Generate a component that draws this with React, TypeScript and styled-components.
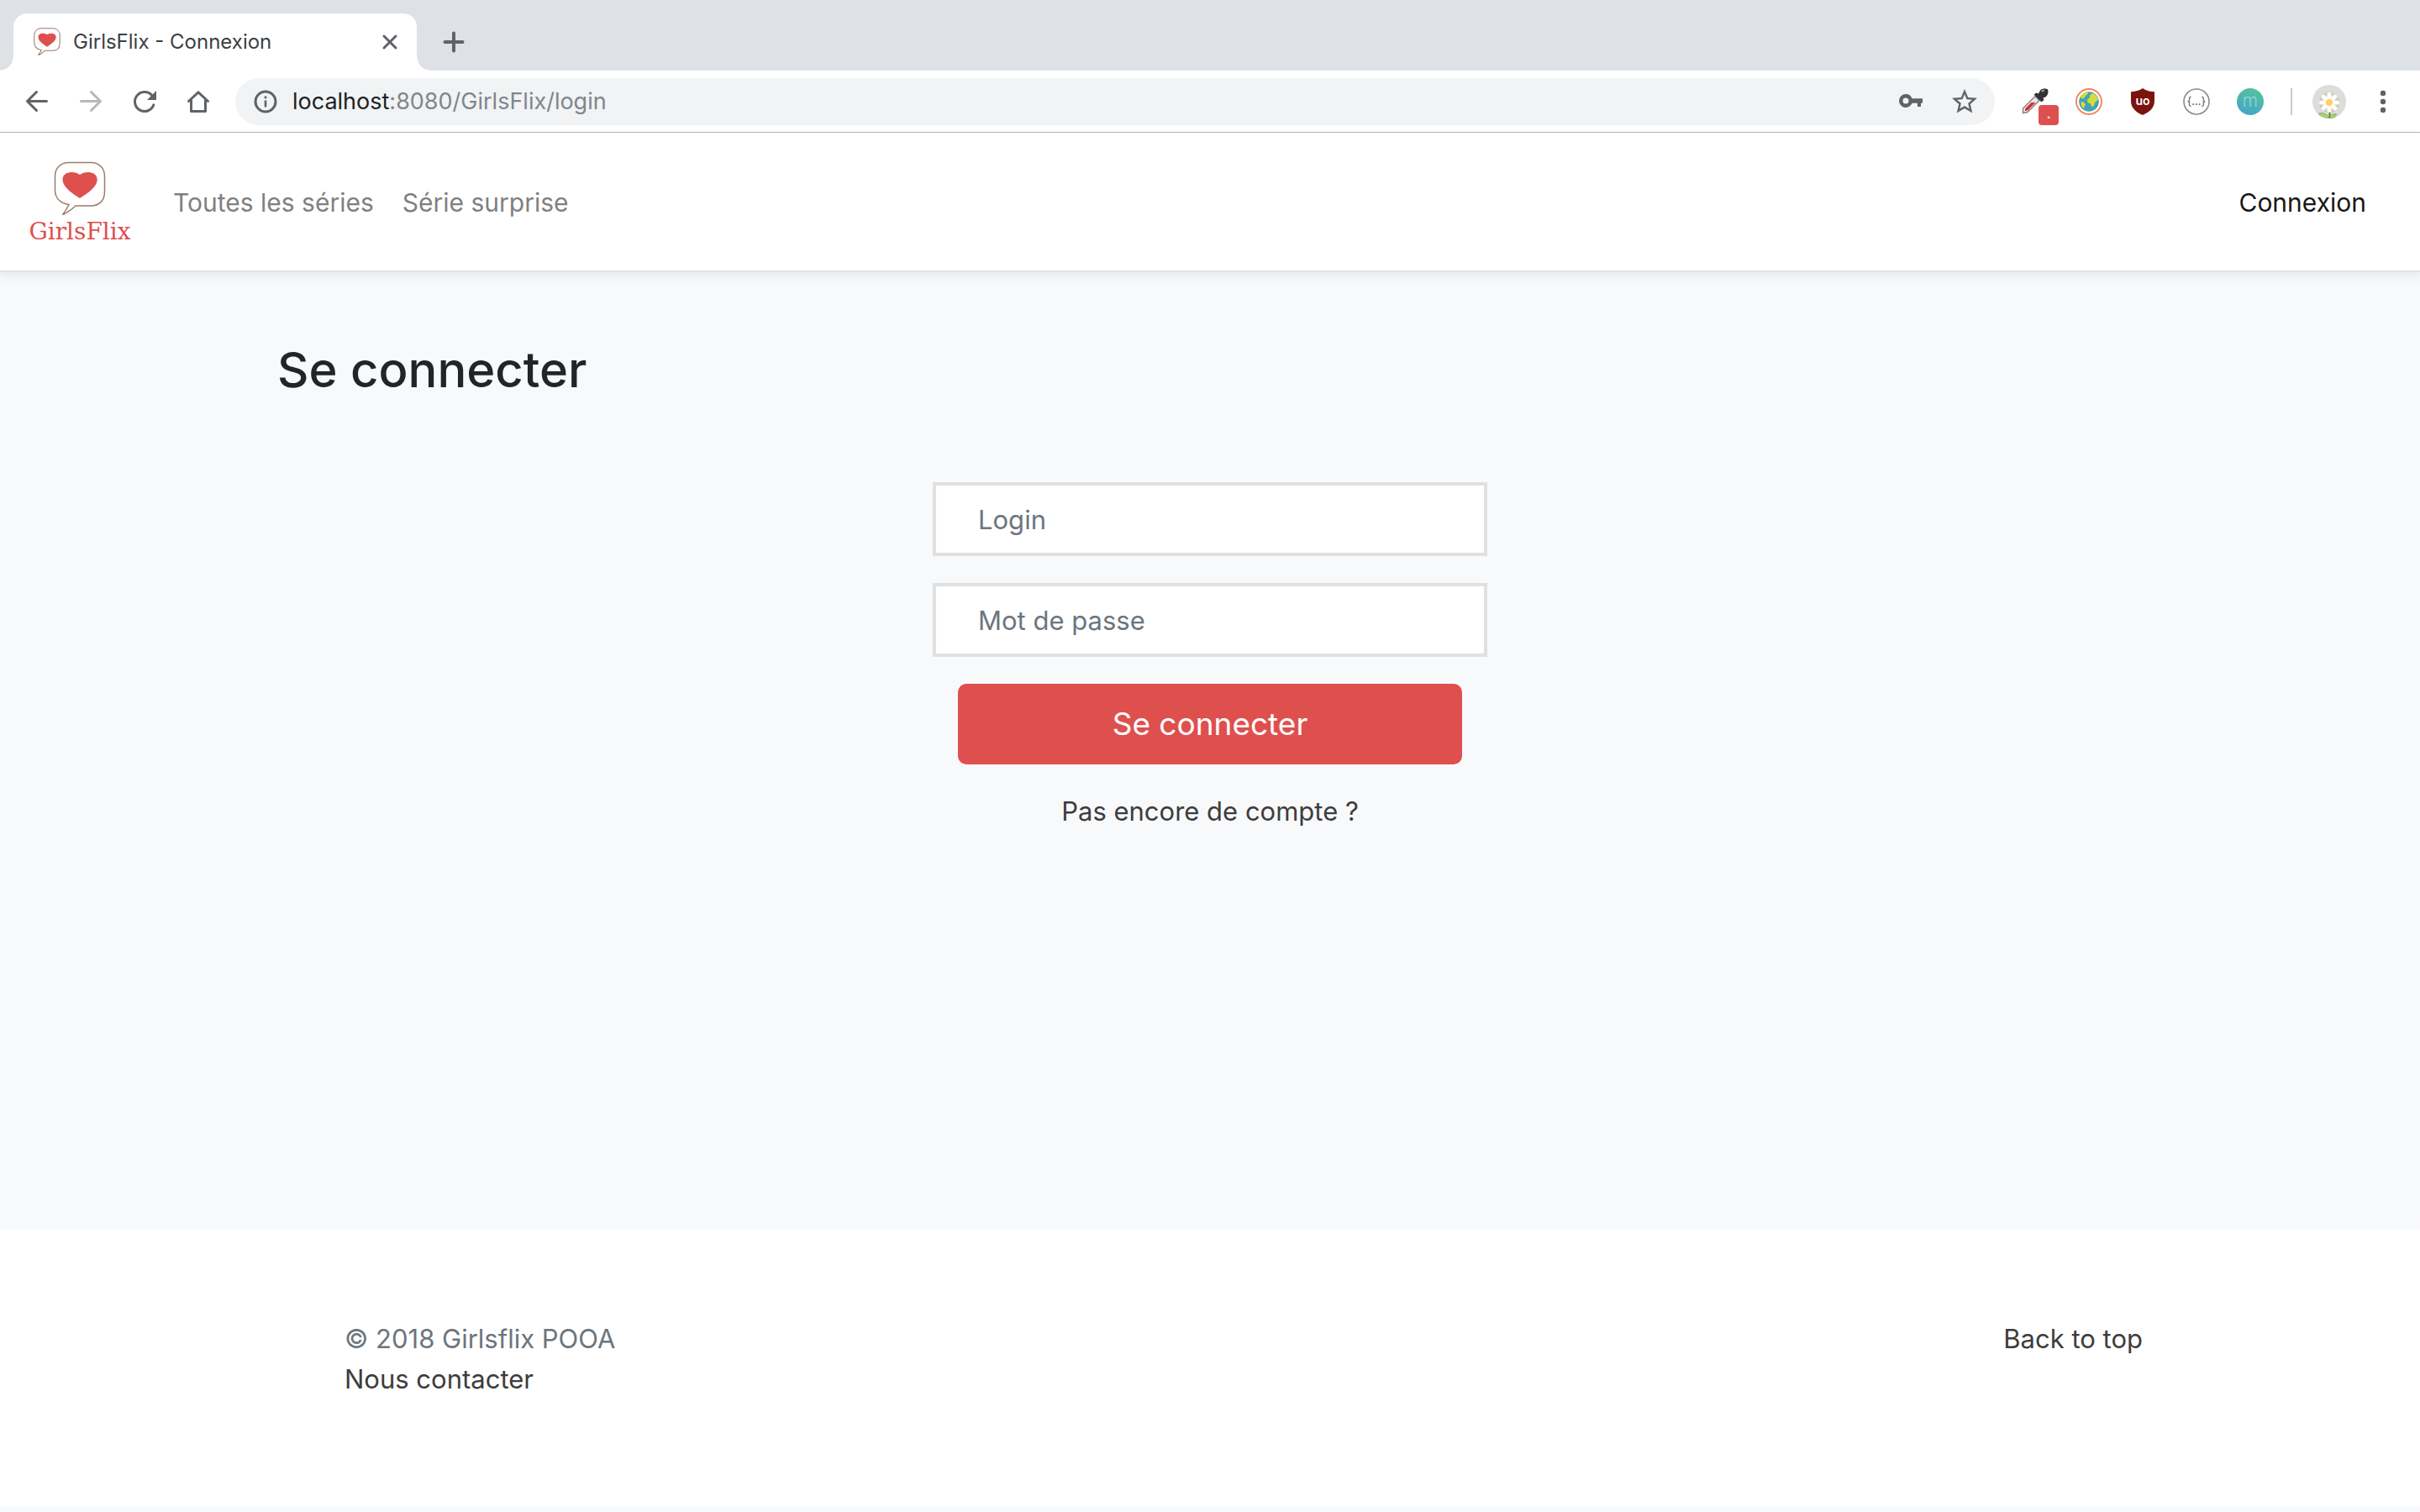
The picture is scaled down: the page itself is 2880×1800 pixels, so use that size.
import React from "react";
import styled, { createGlobalStyle } from "styled-components";

const colors = {
  strip: "#dee1e6",
  icon: "#5f6368",
  pill: "#f1f3f4",
  page: "#f8f9fb",
  red: "#de504e",
  muted: "#6c757d",
  link: "#3d3d3d",
};

const GlobalStyle = createGlobalStyle`
  *, *::before, *::after { box-sizing: border-box; }
  body {
    margin: 0;
    background: ${colors.page};
    color: #212529;
    font-family: Inter, "Liberation Sans", sans-serif;
    font-size: 31px;
    line-height: 48px;
  }
  button, input { font: inherit; }
`;

const Window = styled.div`
  display: flex;
  flex-direction: column;
  min-height: 100vh;
  padding-bottom: 6px;
`;

/* Browser chrome */

const TabStrip = styled.div`
  display: flex;
  height: 84px;
  padding: 16px 16px 0;
  background: ${colors.strip};
`;

const Tab = styled.div`
  position: relative;
  display: flex;
  align-items: center;
  width: 480px;
  padding: 0 16px 0 24px;
  border-radius: 16px 16px 0 0;
  background: #fff;
  color: #3c4043;
  font-size: 24px;
  line-height: 32px;

  &::before,
  &::after {
    content: "";
    position: absolute;
    bottom: 0;
    width: 16px;
    height: 16px;
  }
  &::before {
    right: 100%;
    background: radial-gradient(circle at 0 0, transparent 15px, #fff 16px);
  }
  &::after {
    left: 100%;
    background: radial-gradient(circle at 100% 0, transparent 15px, #fff 16px);
  }
`;

const TabTitle = styled.span`
  flex: 1;
  margin-left: 15px;
  white-space: nowrap;
`;

const PlainButton = styled.button`
  display: inline-flex;
  align-items: center;
  justify-content: center;
  flex: none;
  padding: 0;
  border: 0;
  background: none;
  color: ${colors.icon};
  cursor: pointer;
`;

const CloseButton = styled(PlainButton)`
  width: 32px;
  height: 32px;
`;

const NewTabButton = styled(PlainButton)`
  width: 56px;
  margin-left: 16px;
`;

const Toolbar = styled.div`
  display: flex;
  align-items: center;
  height: 74px;
  padding: 0 12px;
  border-bottom: 1px solid #b4b5b7;
  background: #fff;
`;

const ToolButton = styled(PlainButton)<{ $faded?: boolean }>`
  position: relative;
  width: 64px;
  height: 56px;
  opacity: ${(p) => (p.$faded ? 0.45 : 1)};
`;

const AddressBar = styled.div`
  display: flex;
  flex: 1;
  align-items: center;
  height: 56px;
  margin: 0 16px 0 12px;
  padding: 0 4px;
  border-radius: 28px;
  background: ${colors.pill};
`;

const Address = styled.span`
  flex: 1;
  color: #80868b;
  font-size: 27px;
  line-height: 32px;
`;

const Host = styled.span`
  color: #202124;
`;

const Badge = styled.span`
  position: absolute;
  right: 4px;
  bottom: 0;
  width: 24px;
  height: 24px;
  border-radius: 4px;
  background: ${colors.red};
  color: #fff;
  font-size: 18px;
  line-height: 20px;
  text-align: center;
`;

const Separator = styled.span`
  width: 2px;
  height: 32px;
  margin: 0 12px 0 16px;
  background: #c8c9cb;
`;

/* Site */

const Navbar = styled.nav`
  position: relative;
  display: flex;
  align-items: center;
  height: 166px;
  padding: 2px 64px 0 32px;
  border-bottom: 2px solid #dee2e6;
  background: #fff;
  box-shadow: 0 4px 12px rgba(0, 0, 0, 0.08);
`;

const Brand = styled.a`
  display: flex;
  flex-direction: column;
  align-items: center;
  width: 126px;
  margin-right: 48px;
  padding-top: 4px;
  color: ${colors.red};
  font-family: "DejaVu Serif", serif;
  font-size: 28px;
  line-height: 36px;
  text-decoration: none;
`;

const NavLinks = styled.div`
  display: flex;
  flex: 1;
  gap: 34px;
`;

const NavLink = styled.a<{ $active?: boolean }>`
  color: ${(p) => (p.$active ? "#181818" : "#808080")};
  font-size: 30px;
  text-decoration: none;
  white-space: nowrap;
`;

const Main = styled.main`
  flex: 1;
  width: 100%;
  max-width: 2220px;
  margin: 0 auto;
  padding: 78px 0 64px;
`;

const Title = styled.h1`
  margin: 0 0 96px;
  font-size: 58px;
  font-weight: 500;
  line-height: 76px;
`;

const LoginForm = styled.form`
  display: flex;
  flex-direction: column;
  gap: 32px;
  max-width: 660px;
  margin: 0 auto;
`;

const Field = styled.input`
  width: 100%;
  height: 88px;
  padding: 0 50px;
  border: 4px solid #dee0e2;
  border-radius: 0;
  background: #fff;
  color: #495057;

  &::placeholder {
    color: ${colors.muted};
    opacity: 1;
  }
`;

const SubmitButton = styled.button`
  height: 96px;
  margin: 0 30px;
  border: 0;
  border-radius: 10px;
  background: ${colors.red};
  color: #fff;
  font-size: 37px;
  cursor: pointer;
`;

const TextLink = styled.a`
  align-self: center;
  color: ${colors.link};
  text-decoration: none;
`;

const Footer = styled.footer`
  padding: 106px 0 128px;
  background: #fff;
`;

const FooterInner = styled.div`
  display: flex;
  align-items: flex-start;
  justify-content: space-between;
  max-width: 2220px;
  margin: 0 auto;
  padding-left: 80px;
`;

const FooterColumn = styled.div`
  display: flex;
  flex-direction: column;
  align-items: flex-start;
  color: ${colors.muted};
`;

const FooterLink = styled.a`
  color: ${colors.link};
  text-decoration: none;
`;

/* Drawings */

type IconProps = { size?: number; children: React.ReactNode };

const Icon = ({ size = 32, children }: IconProps) => (
  <svg width={size} height={size} viewBox="0 0 32 32" fill="none" aria-hidden="true">
    {children}
  </svg>
);

const line = {
  stroke: "currentColor",
  strokeWidth: 3,
  strokeLinecap: "round" as const,
  strokeLinejoin: "round" as const,
};

const BubbleHeart = ({ width, height, stroke }: { width: number; height: number; stroke: number }) => (
  <svg width={width} height={height} viewBox="0 0 62 66" fill="none" aria-hidden="true">
    <path
      d="M18 51.500C8 50 1.500 44 1.500 34V18C1.500 8 8 1.500 18 1.500H44C54 1.500 60.500 8 60.500 18V36C60.500 47 54 53 44 53H26C21 57.500 17 61 10.500 63.500C13.500 60 16 56 18 51.500Z"
      stroke="#9b7b68"
      strokeWidth={stroke}
    />
    <path
      d="M31 44C24 39.500 10.500 31.500 10.500 21.500C10.500 16.500 15 13 21 13C25 13 28.500 14 31 16C33.500 14 37 13 41 13C47 13 51.700 16.500 51.700 21.500C51.700 31.500 38 39.500 31 44Z"
      fill={colors.red}
    />
  </svg>
);

const petals = [0, 45, 90, 135, 180, 225, 270, 315];

const Daisy = () => (
  <svg width="40" height="40" viewBox="0 0 40 40" aria-hidden="true">
    <defs>
      <clipPath id="avatar">
        <circle cx="20" cy="20" r="20" />
      </clipPath>
    </defs>
    <g clipPath="url(#avatar)">
      <rect width="40" height="40" fill="#dcdcdc" />
      <path d="M20.500 24V40" stroke="#5d8a35" strokeWidth="2" />
      <path d="M20 40C12 41 8 38 8 34C13 33 18 35 20 40Z" fill="#a9d27c" stroke="#7fae52" />
      <path d="M21 40C21 36 24 34 28.500 35C28 38 25 40 21 40Z" fill="#a9d27c" stroke="#7fae52" />
      {petals.map((a) => (
        <ellipse key={a} cx="20" cy="13.500" rx="2.400" ry="5" fill="#d6c8b2" transform={`rotate(${a + 22} 20 21)`} />
      ))}
      {petals.map((a) => (
        <ellipse key={a} cx="20" cy="13.500" rx="2.600" ry="4.500" fill="#fff" transform={`rotate(${a} 20 21)`} />
      ))}
      <circle cx="20" cy="21" r="4.300" fill="#fbd264" />
    </g>
  </svg>
);

export default function App() {
  return (
    <Window id="top">
      <GlobalStyle />

      <TabStrip>
        <Tab>
          <BubbleHeart width={32} height={34} stroke={2} />
          <TabTitle>GirlsFlix - Connexion</TabTitle>
          <CloseButton type="button" aria-label="Fermer">
            <Icon>
              <path d="M9 9L23 23M23 9L9 23" {...line} />
            </Icon>
          </CloseButton>
        </Tab>
        <NewTabButton type="button" aria-label="Nouvel onglet">
          <Icon>
            <path d="M16 5.500V26.500M5.500 16H26.500" {...line} strokeWidth={4} />
          </Icon>
        </NewTabButton>
      </TabStrip>

      <Toolbar>
        <ToolButton type="button" aria-label="Précédent">
          <Icon>
            <path d="M15.500 4.500L4.500 15.500L15.500 26.500M4.500 15.500H27.500" {...line} />
          </Icon>
        </ToolButton>
        <ToolButton type="button" aria-label="Suivant" $faded>
          <Icon>
            <path d="M16.500 4.500L27.500 15.500L16.500 26.500M27.500 15.500H4.500" {...line} />
          </Icon>
        </ToolButton>
        <ToolButton type="button" aria-label="Actualiser">
          <Icon>
            <path d="M24.500 8.200A11.500 11.500 0 1 0 26.900 19.800" {...line} />
            <path d="M30 3V14H19Z" fill="currentColor" />
          </Icon>
        </ToolButton>
        <ToolButton type="button" aria-label="Accueil">
          <Icon>
            <path d="M4.500 15.500L16 4.800L27.500 15.500M7.500 14V27.500H24.500V14" {...line} />
          </Icon>
        </ToolButton>
        <AddressBar>
          <ToolButton type="button" aria-label="Informations">
            <Icon>
              <circle cx="16" cy="16" r="12" stroke="currentColor" strokeWidth="3" />
              <path d="M16 14.500V22.500M16 9.500V12.200" stroke="currentColor" strokeWidth="2.600" />
            </Icon>
          </ToolButton>
          <Address>
            <Host>localhost</Host>:8080/GirlsFlix/login
          </Address>
          <ToolButton type="button" aria-label="Mots de passe">
            <Icon>
              <path
                fill="currentColor"
                fillRule="evenodd"
                d="M10 7A8 8 0 0 1 17.500 12.300H30V17.800H28V22H24V17.800H17.500A8 8 0 1 1 10 7ZM10 11.500A3.500 3.500 0 1 0 10 18.500A3.500 3.500 0 1 0 10 11.500Z"
              />
            </Icon>
          </ToolButton>
          <ToolButton type="button" aria-label="Favori">
            <svg width="36" height="36" viewBox="0 0 24 24" aria-hidden="true">
              <path
                fill="currentColor"
                d="M22 9.240l-7.190-.620L12 2 9.190 8.630 2 9.240l5.460 4.730L5.820 21 12 17.270 18.180 21l-1.630-7.030L22 9.240zM12 15.400l-3.760 2.270 1-4.280-3.320-2.880 4.380-.380L12 6.100l1.710 4.040 4.380.380-3.320 2.880 1 4.280L12 15.400z"
              />
            </svg>
          </ToolButton>
        </AddressBar>

        <ToolButton type="button" aria-label="Pipette">
          <Icon>
            <path d="M1.500 29.500V24L16 9.500L21 14.500L7 28.500Z" fill="#e9e4e4" stroke="#8a8484" strokeWidth="1.500" />
            <path d="M4 27V24.500L11.500 17H16.500L7 26.500Z" fill="#d22d31" />
            <path d="M14.500 7.500L17.500 5.500L20 6.500L22 2.500C24.500 0 29 0 31 1.500C32 4 31.500 8 28.500 10.500L25.500 11.500L26.500 14L23.500 16.500Z" fill="#333" />
            <path d="M23.500 3.800L27 2.500" stroke="#999" strokeWidth="2" />
          </Icon>
          <Badge>.</Badge>
        </ToolButton>
        <ToolButton type="button" aria-label="Globe">
          <Icon>
            <circle cx="16" cy="16" r="15" fill="#fff" stroke="#f47f57" strokeWidth="1.800" />
            <circle cx="16" cy="16" r="11.800" fill="#43a3b3" />
            <path d="M6.500 9C9 6 12 4.600 15 4.300L14.500 7L12 9L10.500 11.500L8 12.500L6 11Z" fill="#d5dc40" />
            <path d="M6.500 16L9.500 16.500L12 19L10.500 22L9.500 24.500L7 21Z" fill="#d5dc40" />
            <path d="M17.500 7.500L21 6L25 9L27 13L25 15.500L23 17L22.500 20L19.500 22.500L18 18.500L14.500 17L14 13.500L17 11Z" fill="#d5dc40" />
          </Icon>
        </ToolButton>
        <ToolButton type="button" aria-label="Bloqueur">
          <Icon>
            <path d="M16 0C20 3 25 4 30 4.200V15C30 23.500 24 28.500 16 32C8 28.500 2 23.500 2 15V4.200C7 4 12 3 16 0Z" fill="#7c130e" />
            <text x="16" y="20" textAnchor="middle" fill="#fff" fontFamily="Inter, sans-serif" fontSize="14" fontWeight="600">uo</text>
          </Icon>
        </ToolButton>
        <ToolButton type="button" aria-label="JSON">
          <Icon>
            <circle cx="16" cy="16" r="15" fill="#fff" stroke="#8b8b8b" strokeWidth="1.600" />
            <text x="16" y="20" textAnchor="middle" fill="#555" fontFamily="Inter, sans-serif" fontSize="13">{"{...}"}</text>
          </Icon>
        </ToolButton>
        <ToolButton type="button" aria-label="Momentum">
          <Icon>
            <defs>
              <linearGradient id="teal" x1="0.700" y1="0" x2="0.300" y2="1">
                <stop offset="0" stopColor="#56c3a0" />
                <stop offset="1" stopColor="#43a6c6" />
              </linearGradient>
            </defs>
            <circle cx="16" cy="16" r="16" fill="url(#teal)" />
            <text x="16" y="22" textAnchor="middle" fill="#a9e0d8" fontFamily="Inter, sans-serif" fontSize="21" fontWeight="200">m</text>
          </Icon>
        </ToolButton>
        <Separator />
        <ToolButton type="button" aria-label="Profil">
          <Daisy />
        </ToolButton>
        <ToolButton type="button" aria-label="Menu">
          <Icon>
            <g fill="currentColor">
              <circle cx="16" cy="6" r="3.200" />
              <circle cx="16" cy="16" r="3.200" />
              <circle cx="16" cy="26" r="3.200" />
            </g>
          </Icon>
        </ToolButton>
      </Toolbar>

      <Navbar>
        <Brand href="#">
          <BubbleHeart width={62} height={66} stroke={1.5} />
          GirlsFlix
        </Brand>
        <NavLinks>
          <NavLink href="#">Toutes les séries</NavLink>
          <NavLink href="#">Série surprise</NavLink>
        </NavLinks>
        <NavLink href="#" $active>
          Connexion
        </NavLink>
      </Navbar>

      <Main>
        <Title>Se connecter</Title>
        <LoginForm onSubmit={(e) => e.preventDefault()}>
          <Field type="text" name="login" placeholder="Login" aria-label="Login" />
          <Field type="password" name="password" placeholder="Mot de passe" aria-label="Mot de passe" />
          <SubmitButton type="submit">Se connecter</SubmitButton>
          <TextLink href="#">Pas encore de compte ?</TextLink>
        </LoginForm>
      </Main>

      <Footer>
        <FooterInner>
          <FooterColumn>
            <span>© 2018 Girlsflix POOA</span>
            <FooterLink href="#">Nous contacter</FooterLink>
          </FooterColumn>
          <FooterLink href="#top">Back to top</FooterLink>
        </FooterInner>
      </Footer>
    </Window>
  );
}
